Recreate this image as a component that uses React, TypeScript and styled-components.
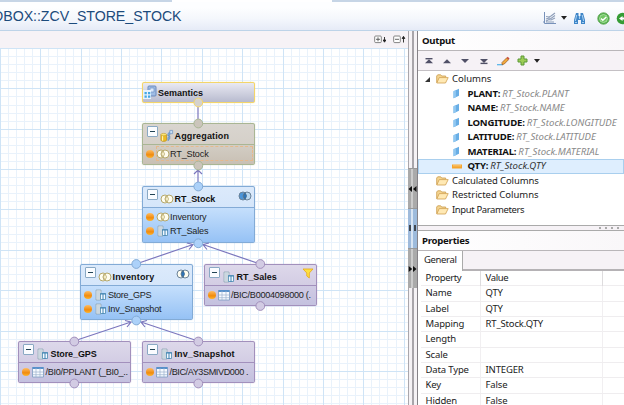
import React from "react";
import styled, { createGlobalStyle } from "styled-components";

const Global = createGlobalStyle`
  *{box-sizing:border-box}
  body{margin:0;overflow:hidden;background:#fff}
  svg{display:block;flex:none}
`;
const ui = `"Noto Sans","Open Sans",sans-serif`;
const sans = `"Liberation Sans",Arial,sans-serif`;

const Window = styled.div`width:624px;height:405px;display:flex;flex-direction:column;overflow:hidden;font-family:${ui};color:#222;`;
const TabStrip = styled.div`height:2px;flex:none;display:flex;background:#c6d5e6;`;
const ActiveTab = styled.div`margin-left:172px;width:160px;background:#fff;`;
const Header = styled.div`height:29px;flex:none;display:flex;justify-content:space-between;align-items:center;background:linear-gradient(#fdfeff 20%,#f4f7fc 60%,#e6ebf7);border-bottom:1px solid #bdd3e8;`;
const Title = styled.div`width:184px;height:28px;display:flex;justify-content:flex-end;overflow:hidden;white-space:nowrap;font:14.2px/28px ${sans};letter-spacing:-0.05px;color:#1c4b7c;padding-right:2.5px;`;
const HeaderTools = styled.div`width:81px;height:28px;padding-top:4px;display:flex;align-items:center;`;
const Divider = styled.div`width:1px;height:18px;background:#bbb;margin:0 8px 0 3px;`;
const Body = styled.div`flex:1;display:flex;min-height:0;`;
const Left = styled.div`width:408px;display:flex;flex-direction:column;`;
const CanvasTools = styled.div`height:17px;flex:none;background:#f6f2f6;display:flex;justify-content:flex-end;align-items:center;gap:6px;padding-right:2px;`;
const Canvas = styled.div`
  flex:1;position:relative;overflow:hidden;background-color:#fff;
  background-image:repeating-linear-gradient(90deg,#cfe4f6 0 1px,transparent 1px 40.36px),repeating-linear-gradient(#cfe4f6 0 1px,transparent 1px 40.36px),repeating-linear-gradient(90deg,#e9f2fb 0 1px,transparent 1px 8.072px),repeating-linear-gradient(#e9f2fb 0 1px,transparent 1px 8.072px);
`;
const Wires = styled.svg`position:absolute;inset:0;`;
const Splitter = styled.div`width:9px;flex:none;display:flex;flex-direction:column;background:linear-gradient(90deg,#aaa7ac 0 1px,#f5f2f5 1px 4px,#a8a5aa 4px 6px,#f5f2f5 6px 9px);padding-top:137px;`;
const Grip = styled.div<{ $on?: boolean }>`height:40px;display:flex;align-items:center;justify-content:center;background:${p => p.$on ? "linear-gradient(90deg,#9fbbdc 0 3px,#d8e5f3 3px 5px,#9dbbdc 5px 9px)" : "linear-gradient(90deg,#aaa 0 3px,#ccc 3px 5px,#aaa 5px 9px)"};border-top:1px solid #999;`;
const Right = styled.div`flex:1;min-width:0;display:flex;flex-direction:column;border-left:1px solid #858287;background:#fff;`;
const PaneTitle = styled.div`height:20px;flex:none;padding-left:4px;font:bold 9.6px/20px ${ui};letter-spacing:-.25px;color:#111;background:linear-gradient(90deg,#fff,#f9f7f9);border-bottom:1px solid #b9b6b9;`;
const PaneTools = styled.div`height:20px;flex:none;background:#f6f2f6;border-bottom:1px solid #c4c0c4;display:flex;align-items:center;padding-left:6px;gap:8.2px;&>svg:nth-child(n+6){margin-left:-1.4px}`;
const Tree = styled.div`height:154px;flex:none;padding-top:1px;`;
const TreeRow = styled.div<{ $leaf?: boolean; $sel?: boolean; $s?: number }>`
  height:14.5px;display:flex;align-items:center;white-space:nowrap;letter-spacing:${p => p.$s ?? 0}px;
  font:${p => p.$leaf ? 9.6 : 9.5}px/14px ${ui};padding-left:${p => p.$leaf ? 33.5 : 6}px;
  ${p => p.$sel && "background:#deeefe;box-shadow:inset 0 0 0 1px #a9cfee;"}
`;
const Twist = styled.div`width:12px;`;
const IconBox = styled.div`width:15px;flex:none;margin-right:1px;`;
const Field = styled.b`color:#111;letter-spacing:-.2px;margin-right:2px;`;
const Source = styled.i<{ $sel?: boolean }>`color:${p => p.$sel ? "#333" : "#888"};letter-spacing:.04px;`;
const Sash = styled.div`height:6px;flex:none;background:#f6f2f6;border:solid #aaa;border-width:1px 0;display:flex;justify-content:flex-end;align-items:center;gap:4px;padding-right:5px;`;
const Dot = styled.div`width:2px;height:2px;background:#aaa;`;
const Tabs = styled.div`height:20px;flex:none;background:#f6f2f6;border-bottom:2px solid #b5b2b5;display:flex;`;
const Tab = styled.div`width:45px;height:20px;background:#fff;border-right:1px solid #aaa;font:9.5px/18px ${ui};letter-spacing:-.35px;padding-left:6px;`;
const Table = styled.div`padding-left:3px;`;
const Row = styled.div<{ $head?: boolean }>`
  height:15.35px;display:grid;grid-template-columns:60px 122px 1fr;font:9.5px/14.6px ${ui};border-bottom:1px solid #efedef;
  & > div{padding-left:4.5px;border-right:1px solid ${p => p.$head ? "#dedcde" : "#f1eff1"};letter-spacing:${p => p.$head ? -.35 : -.15}px;white-space:nowrap}
  & > div:last-child{border-right:0}
`;

type Tone = "gray" | "tan" | "blue" | "mauve";
const tones: Record<Tone, { edge: string; top: string; bottom: string; port: string }> = {
  gray: { edge: "#f3d56a", top: "linear-gradient(#e9e9f2,#b8bbcf)", bottom: "", port: "#d5d2cd" },
  tan: { edge: "#a9b694", top: "linear-gradient(#d9d5cf,#d1cbc3)", bottom: "linear-gradient(#d3cdc4,#c8c0b4)", port: "#cbc5bb" },
  blue: { edge: "#83abd6", top: "linear-gradient(#dceafb,#c9dff9)", bottom: "linear-gradient(#c5dffc,#96c2f5)", port: "#acd1f9" },
  mauve: { edge: "#a290bc", top: "linear-gradient(#ddd8ea,#c9c2de)", bottom: "linear-gradient(#d0cbe4,#c4c1df)", port: "#d2cbe3" },
};
const Box = styled.div<{ $x: number; $y: number; $h: number; $tone: Tone }>`
  position:absolute;left:${p => p.$x}px;top:${p => p.$y - 48}px;width:113px;height:${p => p.$h}px;
  display:flex;flex-direction:column;border:1px solid ${p => tones[p.$tone].edge};border-radius:2px;
  background:${p => tones[p.$tone].top};box-shadow:0 0 1px ${p => tones[p.$tone].edge};
`;
const BoxHead = styled.div<{ $short?: boolean }>`height:${p => p.$short ? 19 : 20}px;flex:none;display:flex;align-items:center;padding:${p => p.$short ? "0" : "0 2px 0 4px"};`;
const Name = styled.div<{ $s: number; $short?: boolean }>`flex:1;font:bold 9px/12px ${sans};color:#111;white-space:nowrap;letter-spacing:${p => p.$s}px;margin-top:${p => p.$short ? 0 : 3}px;`;
const HeadIcon = styled.div<{ $short?: boolean }>`width:${p => p.$short ? 15 : 14.5}px;flex:none;padding-top:${p => p.$short ? 0 : 4}px;`;
const Badge = styled.div`align-self:flex-start;padding-top:3px;`;
const Inputs = styled.div<{ $tone: Tone }>`flex:1;padding-top:1.5px;background:${p => tones[p.$tone].bottom};border-top:1px solid ${p => tones[p.$tone].edge};`;
const Input = styled.div`height:14.4px;display:flex;align-items:center;padding-left:3px;font:9.1px/14px ${sans};color:#1d1d1d;white-space:nowrap;`;
const InputLabel = styled.span<{ $s: number; $gap?: number }>`letter-spacing:${p => p.$s}px;margin-left:${p => p.$gap ?? 0}px;`;
const Outline = styled.div<{ $on?: boolean }>`display:flex;align-items:center;margin-left:2px;height:15px;width:97px;${p => p.$on && "outline:1px dashed #e5b98c;outline-offset:-1px;"}`;
const Ball = styled.div`width:8px;height:8px;border-radius:4px;flex:none;background:linear-gradient(#ffbd63,#f08b0e 60%,#ffb52d);`;
const MinusBox = styled.div`width:11px;height:11px;flex:none;align-self:flex-start;margin-top:2px;margin-right:2px;background:#fafcff;border:1px solid #8aa9c4;border-radius:1px;display:flex;align-items:center;justify-content:center;&::after{content:"";width:5px;height:1px;background:#245}`;

const Join = ({ fill, badge }: { fill?: "left" | "mid"; badge?: boolean }) => (
  <svg width={14} height={12} viewBox="0 0 14 12">
    <circle cx="5" cy="6" r="4" fill={fill === "left" ? "#4a95d9" : "#fffdf0"} stroke={badge ? "#6a8298" : "#b5a76a"} />
    <circle cx="9" cy="6" r="4" fill={fill === "left" ? "#b9d7ef" : "#fffdf0"} stroke={badge ? "#6a8298" : "#b5a76a"} />
    <path d="M7 2.6Q10 6 7 9.4Q4 6 7 2.6Z" fill={fill ? "#2775c5" : "#fff8d9"} stroke={badge ? "#456985" : "#b5a76a"} strokeWidth=".8" />
  </svg>
);
const Projection = () => (
  <svg width={13} height={12} viewBox="0 0 13 12">
    <path d="M2 1h5v10H2z" fill="#e1e9ee" stroke="#91a6b5" strokeWidth=".8" /><path d="M3 3h3M3 5h3M3 7h3M3 9h3" stroke="#a5b7c4" strokeWidth=".7" />
    <path d="M6.5 4.5h5v6h-5z" fill="#f2f9ff" stroke="#5a93b8" strokeWidth=".9" /><path d="M6 5h6M9 5v6" stroke="#3f82b2" />
  </svg>
);
const TableIcon = () => (
  <svg width={12} height={12} viewBox="0 0 12 12"><path d="M.5 1.5h11v9.5H.5z" fill="#f7fbff" stroke="#7a9bc0" strokeWidth=".8" /><path d="M.5 1h11v2H.5z" fill="#5790ca" /><path d="M4 2v9M8 2v9M1 6h10M1 8.7h10" stroke="#9bb3cd" strokeWidth=".7" /></svg>
);
const AggIcon = () => (
  <svg width={14} height={14} viewBox="0 0 15 14"><path d="M1 5.5v6c0 1.7 6 1.7 6 0v-6" fill="#edbb23" stroke="#b28919" strokeWidth=".7" /><path d="M2.7 6v6" stroke="#fff3ac" strokeWidth="1.3" /><ellipse cx="4" cy="5.5" rx="3" ry="1.3" fill="#fce573" stroke="#bd9929" strokeWidth=".6" /><path d="M8.5 7V4.5l2-2v3.6zM8.5 12V8.5l2-1.5v3z" fill="#88b5e5" stroke="#4f7fb5" strokeWidth=".7" /><path d="M10.5 1h3v3.5h-3z" fill="#c5def6" stroke="#688fbd" strokeWidth=".7" /></svg>
);
const SemIcon = () => (
  <svg width={15} height={15} viewBox="0 0 15 15"><rect x="5" y="1" width="8" height="10" rx="1" fill="#9fbce4" stroke="#6c8bbd" /><path d="M7 3h4v4H7z" fill="#dce9fa" stroke="#6a91c6" strokeWidth=".7" /><path d="M0 5h8v9H0z" fill="#e7f3fe" /><path d="M1.5 7h2.3v2.3H1.5zM5 7h2.3v2.3H5zM1.5 10.5h2.3v2.3H1.5zM5 10.5h2.3v2.3H5z" fill="#45a8e3" /></svg>
);
const Funnel = () => <svg width={12} height={11} viewBox="0 0 12 11"><path d="M1 1h10L7.3 5v5L4.8 8V5Z" fill="#ffe13e" stroke="#e9ad20" strokeWidth=".9" /></svg>;
const Folder = () => <svg width={13} height={10} viewBox="0 0 13 10"><path d="M.7 8.7V2l1-1.2h3l1 1.2h4v1.5" fill="#f5d591" stroke="#c99a4a" strokeWidth=".8" /><path d="M.8 9 3.2 3.6h9L9.5 9z" fill="#ffe9b4" stroke="#cf9f50" strokeWidth=".8" /></svg>;
const Attr = () => <svg width={8} height={11} viewBox="0 0 8 11"><path d="M1.5 3.2 7 .7v7L1.5 10.3z" fill="#69aee5" /><path d="m1.5 3.2 2.4-1.1v7.1L1.5 10.3z" fill="#91c8f1" /></svg>;
const Measure = () => <svg width={10} height={5} viewBox="0 0 10 5"><path d="M0 .5h10v4H0z" fill="#f5a42d" /><path d="M2 .5v2M4 .5v2M6 .5v2M8 .5v2" stroke="#ffe0a7" strokeWidth=".8" /></svg>;
const Arrow = ({ up, bar }: { up?: boolean; bar?: boolean }) => (
  <svg width={10} height={8} viewBox="0 0 10 8"><path d={up ? "M1 6.3 5 2.3 9 6.3z" : "M1 2h8L5 6z"} fill="#505067" />{bar && <path d={up ? "M1.5 1.7h7" : "M1.5 6.4h7"} stroke="#505067" strokeWidth="1.4" />}</svg>
);
const Caret = () => <svg width={6} height={4} viewBox="0 0 6 4"><path d="M0 0h6L3 3.7z" fill="#222" /></svg>;
const Pencil = () => <svg width={13} height={10} viewBox="0 0 13 10"><path d="M0 8.7h6" stroke="#52b2e9" strokeWidth="1.2" /><path d="m5 6.5 4.5-4.5 2 1.7-4.2 4.3-2.3.7z" fill="#f3a83a" stroke="#925a27" strokeWidth=".7" /><path d="m9.5 2 1.2-1.2 1.8 1.6-1 1.3z" fill="#ca4b38" /></svg>;
const Plus = () => <svg width={11} height={11} viewBox="0 0 11 11"><path d="M4 1h3v3h3v3H7v3H4V7H1V4h3z" fill="#9ccc55" stroke="#5b9836" /></svg>;
const Chart = () => <svg width={14} height={13} viewBox="0 0 14 13"><path d="M1.5 0v11.5H13M0 10h2" fill="none" stroke="#7791ba" /><path d="M3 9 6 7.5 8 8l4-2M3 7l3-1 2 .5 4-3M3 4.5l3 .5 2-1 4-3M3 10h8" fill="none" stroke="#8c9db8" strokeWidth="1.1" /></svg>;
const Binoculars = () => <svg width={13} height={13} viewBox="0 0 13 13"><path d="M3 1h2.5v3h2V1H10l2 7v4H8V8H5v4H1V8z" fill="#3f86c8" /><path d="M3.7 3 2.3 9M9.2 3l1.4 6M6.5 4v3M2 10.5h2M9 10.5h2" stroke="#a5cef0" strokeWidth="1.1" /></svg>;
const Check = () => <svg width={13} height={13} viewBox="0 0 13 13"><circle cx="6.5" cy="6.5" r="5.7" fill="#48ad42" stroke="#6bac61" /><circle cx="6.5" cy="6.5" r="4" fill="#73c766" stroke="#d1efcb" strokeWidth=".6" /><path d="m4 6.5 1.8 1.8L9.3 5" fill="none" stroke="#fff" strokeWidth="1.5" /></svg>;
const Run = () => <svg width={8} height={13} viewBox="0 0 8 13"><circle cx="6.5" cy="6.5" r="5.8" fill="#369c35" /><path d="M3 6.5 6.5 4v1.5H8v2H6.5V9z" fill="#fff" /></svg>;
const ExpandIcon = ({ plus }: { plus?: boolean }) => <svg width={13} height={9} viewBox="0 0 13 9"><rect x=".7" y="1" width="6.6" height="6.6" rx="1" fill="#fff" stroke="#777" strokeWidth=".9" /><path d={plus ? "M2 4.3h4M4 2.3v4" : "M2 4.3h4"} stroke="#555" strokeWidth=".9" /><path d={plus ? "M10.5 2v4M9.2 5h2.6L10.5 7.2z" : "M10.5 7.5v-5M9.2 3.5h2.6L10.5 1.3z"} fill="#222" stroke="#222" strokeWidth=".9" /></svg>;
const Rewind = ({ back }: { back?: boolean }) => <svg width={9} height={8} viewBox="0 0 9 8"><path d={back ? "M4 1v6L.5 4zM8.5 1v6L5 4z" : "M.7 1v6l3.5-3zM5 1v6l3.5-3z"} fill="#111" /></svg>;
const Pause = () => <svg width={9} height={7} viewBox="0 0 9 7"><path d="M2 0v6M7 0v6" stroke="#222" strokeWidth="1.5" /></svg>;

interface NodeInput { icon: React.ReactNode; text: string; s: number; gap?: number; mark?: boolean }
interface NodeData { x: number; y: number; h: number; tone: Tone; name: string; ls: number; icon: React.ReactNode; badge?: React.ReactNode; inputs: NodeInput[] }
const nodes: NodeData[] = [
  { x: 142, y: 123, h: 42, tone: "tan", name: "Aggregation", ls: 0.15, icon: <AggIcon />, inputs: [{ icon: <Join />, text: "RT_Stock", s: -0.15, mark: true }] },
  { x: 142, y: 186, h: 57, tone: "blue", name: "RT_Stock", ls: -0.1, icon: <Join />, badge: <Join fill="left" badge />, inputs: [{ icon: <Join />, text: "Inventory", s: -0.1 }, { icon: <Projection />, text: "RT_Sales", s: -0.18, gap: 1 }] },
  { x: 80, y: 264, h: 56, tone: "blue", name: "Inventory", ls: 0.15, icon: <Join />, badge: <Join fill="mid" badge />, inputs: [{ icon: <Projection />, text: "Store_GPS", s: -0.3, gap: 1 }, { icon: <Projection />, text: "Inv_Snapshot", s: -0.18, gap: 1 }] },
  { x: 204, y: 264, h: 42, tone: "mauve", name: "RT_Sales", ls: -0.05, icon: <Projection />, badge: <Funnel />, inputs: [{ icon: <TableIcon />, text: "/BIC/B0004098000 (.", s: -0.27, gap: 1 }] },
  { x: 18, y: 341, h: 42, tone: "mauve", name: "Store_GPS", ls: -0.1, icon: <Projection />, inputs: [{ icon: <TableIcon />, text: "/BI0/PPLANT (_BI0_..", s: -0.3, gap: 1.5 }] },
  { x: 142, y: 341, h: 42, tone: "mauve", name: "Inv_Snapshot", ls: 0.1, icon: <Projection />, inputs: [{ icon: <TableIcon />, text: "/BIC/AY3SMIVD000 .", s: -0.4, gap: 1.5 }] },
];
const ports: [number, number, Tone][] = [
  [198, 102.5, "gray"], [198, 123.5, "tan"], [198, 165.5, "tan"], [198, 186.5, "blue"], [198, 243.3, "blue"],
  [136, 264, "blue"], [136, 320.5, "blue"], [260, 264, "mauve"], [260, 306, "mauve"],
  [74, 341.5, "mauve"], [74, 383.5, "mauve"], [198, 341.5, "mauve"], [198, 383.5, "mauve"],
];
const wires = [
  "M198 107v12", "M198 182V170M194 174l4-4 4 4",
  "M136 264 193 244.5M187 243l6 1.5-4 5", "M260 264 203 244.5M209 243l-6 1.5 4 5",
  "M74 341 131 322M125 320.5l6 1.5-4 5", "M198 341 141 322M147 320.5l-6 1.5 4 5",
];
const columns = ["PLANT", "NAME", "LONGITUDE", "LATITUDE", "MATERIAL", "QTY"];
const groups: [string, number][] = [["Calculated Columns", -0.1], ["Restricted Columns", 0], ["Input Parameters", -0.38]];
const properties = [["Property", "Value"], ["Name", "QTY"], ["Label", "QTY"], ["Mapping", "RT_Stock.QTY"], ["Length", ""], ["Scale", ""], ["Data Type", "INTEGER"], ["Key", "False"], ["Hidden", "False"]];

const ViewNode = ({ n }: { n: NodeData }) => (
  <Box $x={n.x} $y={n.y} $h={n.h} $tone={n.tone}>
    <BoxHead><MinusBox /><HeadIcon>{n.icon}</HeadIcon><Name $s={n.ls}>{n.name}</Name>{n.badge && <Badge>{n.badge}</Badge>}</BoxHead>
    <Inputs $tone={n.tone}>
      {n.inputs.map(i => <Input key={i.text}><Ball /><Outline $on={i.mark}>{i.icon}<InputLabel $s={i.s} $gap={i.gap}>{i.text}</InputLabel></Outline></Input>)}
    </Inputs>
  </Box>
);

export default function App() {
  return (
    <Window>
      <Global />
      <TabStrip><ActiveTab /></TabStrip>
      <Header>
        <Title>DBOX::ZCV_STORE_STOCK</Title>
        <HeaderTools><Chart /><svg width={4} /><Caret /><svg width={6} /><Binoculars /><Divider /><Check /><svg width={6} /><Run /></HeaderTools>
      </Header>
      <Body>
        <Left>
          <CanvasTools><ExpandIcon plus /><ExpandIcon /></CanvasTools>
          <Canvas>
            <Box $x={142} $y={82} $h={21} $tone="gray"><BoxHead $short><HeadIcon $short><SemIcon /></HeadIcon><Name $s={0} $short>Semantics</Name></BoxHead></Box>
            {nodes.map(n => <ViewNode key={n.name} n={n} />)}
            <Wires width={408} height={357} viewBox="0 48 408 357">
              {wires.map(d => <path key={d} d={d} fill="none" stroke="#7b76bd" strokeWidth="1.2" />)}
              {ports.map(([x, y, t]) => <circle key={`${x}-${y}`} cx={x + 0.3} cy={y} r="4.4" fill={tones[t].port} stroke={tones[t].edge} />)}
            </Wires>
          </Canvas>
        </Left>
        <Splitter><Grip><Rewind back /></Grip><Grip $on><Pause /></Grip><Grip><Rewind /></Grip></Splitter>
        <Right>
          <PaneTitle>Output</PaneTitle>
          <PaneTools><Arrow up bar /><Arrow up /><Arrow /><Arrow bar /><Pencil /><Plus /><Caret /></PaneTools>
          <Tree>
            <TreeRow><Twist><svg width={7} height={7}><path d="M6 1v5H1z" fill="#333" /></svg></Twist><IconBox><Folder /></IconBox>Columns</TreeRow>
            {columns.map(c => <TreeRow key={c} $leaf $sel={c === "QTY"}><IconBox>{c === "QTY" ? <Measure /> : <Attr />}</IconBox><Field>{c}:</Field><Source $sel={c === "QTY"}>RT_Stock.{c}</Source></TreeRow>)}
            {groups.map(([t, s]) => <TreeRow key={t} $s={s}><Twist /><IconBox><Folder /></IconBox>{t}</TreeRow>)}
          </Tree>
          <Sash><Dot /><Dot /><Dot /><Dot /></Sash>
          <PaneTitle>Properties</PaneTitle>
          <Tabs><Tab>General</Tab></Tabs>
          <Table>{properties.map(([k, v], i) => <Row key={k} $head={i === 0}><div>{k}</div><div>{v}</div><div /></Row>)}</Table>
        </Right>
      </Body>
    </Window>
  );
}
